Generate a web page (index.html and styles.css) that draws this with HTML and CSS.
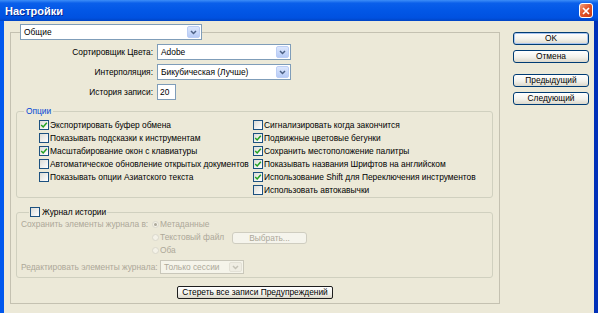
FILE: index.html
```html
<!DOCTYPE html>
<html lang="ru">
<head>
  <meta charset="UTF-8" />
  <title>Настройки</title>
  <link rel="stylesheet" href="styles.css">
</head>
<body>
  <div class="window">
    <div class="titlebar">
      <span class="title">Настройки</span>
      <span class="close-btn">
        <svg width="8" height="8" viewBox="0 0 8 8"><path d="M1 1L7 7M7 1L1 7" stroke="#fff" stroke-width="1.7"/></svg>
      </span>
    </div>

    <div class="client">
      <fieldset class="panel">
        <legend class="panel-legend">
          <div class="combo combo-general">
            <span class="combo-text">Общие</span>
            <span class="combo-btn"><svg width="7" height="5" viewBox="0 0 7 5"><polyline points="1,1 3.5,3.5 6,1" fill="none" stroke="#4D6185" stroke-width="1.5"/></svg></span>
          </div>
        </legend>

        <div class="form-grid">
          <label>Сортировщик Цвета:</label>
          <div class="combo combo-wide">
            <span class="combo-text">Adobe</span>
            <span class="combo-btn"><svg width="7" height="5" viewBox="0 0 7 5"><polyline points="1,1 3.5,3.5 6,1" fill="none" stroke="#4D6185" stroke-width="1.5"/></svg></span>
          </div>
          <label>Интерполяция:</label>
          <div class="combo combo-wide">
            <span class="combo-text">Бикубическая (Лучше)</span>
            <span class="combo-btn"><svg width="7" height="5" viewBox="0 0 7 5"><polyline points="1,1 3.5,3.5 6,1" fill="none" stroke="#4D6185" stroke-width="1.5"/></svg></span>
          </div>
          <label>История записи:</label>
          <div class="textbox">20</div>
        </div>

        <fieldset class="group options">
          <legend class="group-legend">Опции</legend>
          <div class="check-cols">
            <div class="check-col check-col-left">
              <div class="check"><span class="cb"><svg width="8" height="8" viewBox="0 0 8 8"><polyline points="1.2,4 3.2,6 6.8,1.8" fill="none" stroke="#21A121" stroke-width="1.5"/></svg></span>Экспортировать буфер обмена</div>
              <div class="check"><span class="cb"></span>Показывать подсказки к инструментам</div>
              <div class="check"><span class="cb"><svg width="8" height="8" viewBox="0 0 8 8"><polyline points="1.2,4 3.2,6 6.8,1.8" fill="none" stroke="#21A121" stroke-width="1.5"/></svg></span>Масштабирование окон с клавиатуры</div>
              <div class="check"><span class="cb"></span>Автоматическое обновление открытых документов</div>
              <div class="check"><span class="cb"></span>Показывать опции Азиатского текста</div>
            </div>
            <div class="check-col">
              <div class="check"><span class="cb"></span>Сигнализировать когда закончится</div>
              <div class="check"><span class="cb"><svg width="8" height="8" viewBox="0 0 8 8"><polyline points="1.2,4 3.2,6 6.8,1.8" fill="none" stroke="#21A121" stroke-width="1.5"/></svg></span>Подвижные цветовые бегунки</div>
              <div class="check"><span class="cb"><svg width="8" height="8" viewBox="0 0 8 8"><polyline points="1.2,4 3.2,6 6.8,1.8" fill="none" stroke="#21A121" stroke-width="1.5"/></svg></span>Сохранить местоположение палитры</div>
              <div class="check"><span class="cb"><svg width="8" height="8" viewBox="0 0 8 8"><polyline points="1.2,4 3.2,6 6.8,1.8" fill="none" stroke="#21A121" stroke-width="1.5"/></svg></span>Показывать названия Шрифтов на английском</div>
              <div class="check"><span class="cb"><svg width="8" height="8" viewBox="0 0 8 8"><polyline points="1.2,4 3.2,6 6.8,1.8" fill="none" stroke="#21A121" stroke-width="1.5"/></svg></span>Использование Shift для Переключения инструментов</div>
              <div class="check"><span class="cb"></span>Использовать автокавычки</div>
            </div>
          </div>
        </fieldset>

        <fieldset class="group history">
          <legend class="group-legend history-legend"><span class="cb"></span>Журнал истории</legend>
          <div class="hist-row">
            <span class="hist-label hist-label-save">Сохранить элементы журнала в:</span>
            <div class="radios">
              <div class="radio-row"><span class="radio on"></span>Метаданные</div>
              <div class="radio-row"><span class="radio"></span>Текстовый файл<button class="btn btn-disabled btn-pick">Выбрать...</button></div>
              <div class="radio-row"><span class="radio"></span>Оба</div>
            </div>
          </div>
          <div class="hist-row hist-edit">
            <span class="hist-label hist-label-edit">Редактировать элементы журнала:</span>
            <div class="combo combo-disabled">
              <span class="combo-text">Только сессии</span>
              <span class="combo-btn"><svg width="7" height="5" viewBox="0 0 7 5"><polyline points="1,1 3.5,3.5 6,1" fill="none" stroke="#C4C2B6" stroke-width="1.5"/></svg></span>
            </div>
          </div>
        </fieldset>

        <div class="reset-row">
          <button class="btn btn-focus">Стереть все записи Предупреждений</button>
        </div>
      </fieldset>

      <div class="side-buttons">
        <button class="btn btn-default">OK</button>
        <button class="btn btn-cancel">Отмена</button>
        <button class="btn btn-prev">Предыдущий</button>
        <button class="btn btn-next">Следующий</button>
      </div>
    </div>
  </div>
</body>
</html>
```

FILE: styles.css
```css
body {
  margin: 0;
  font-family: "Liberation Sans", Arial, sans-serif;
  font-size: 8.4px;
  color: #000;
  background: #ECE9D8;
  overflow: hidden;
}

.window {
  width: 598px;
  height: 313px;
  display: flex;
  flex-direction: column;
  background: linear-gradient(to right, #0058EE, #0A48D8 50%, #0030B8);
}

.titlebar {
  height: 21px;
  box-sizing: border-box;
  padding: 0 5px 0 5px;
  display: flex;
  align-items: center;
  justify-content: space-between;
  background: linear-gradient(to bottom, #3D8EF8 0%, #0A5FEA 15%, #0257E6 50%, #0051E0 85%, #0044C4 100%);
}

.title {
  color: #fff;
  font-size: 11px;
  font-weight: bold;
  text-shadow: 1px 1px 0 #0A2A93;
}

.close-btn {
  width: 14px;
  height: 15px;
  box-sizing: border-box;
  border: 1px solid #fff;
  border-radius: 3px;
  background: linear-gradient(135deg, #F0A080, #E2552A 45%, #C63A14);
  display: flex;
  align-items: center;
  justify-content: center;
}

.client {
  flex: 1;
  margin: 0 4px;
  background: #ECE9D8;
  display: flex;
  align-items: flex-start;
}

fieldset {
  margin: 0;
  padding: 0;
  min-width: 0;
  min-inline-size: 0;
}

legend {
  padding: 0;
}

.panel {
  width: 490px;
  box-sizing: border-box;
  margin: 3px 0 0 6px;
  padding: 0 0 4px 0;
  border: 1px solid #C4C1B1;
}

.panel-legend {
  margin-left: 9px;
}

/* combo boxes */
.combo {
  display: flex;
  height: 16px;
  box-sizing: border-box;
  border: 1px solid #7F9DB9;
  background: #fff;
}

.combo-text {
  flex: 1;
  padding-left: 3px;
  line-height: 14px;
  white-space: nowrap;
  overflow: hidden;
}

.combo-btn {
  width: 13px;
  margin: 1px;
  border-radius: 2px;
  background: linear-gradient(to bottom, #DCE7FD, #B7CBF6);
  border: 1px solid #BCCEF5;
  box-sizing: border-box;
  display: flex;
  align-items: center;
  justify-content: center;
}

.combo-general {
  width: 182px;
}

.combo-wide {
  width: 134px;
}

.combo-disabled {
  width: 84px;
  height: 14px;
  border-color: #C9C7BA;
  background: #F5F4EA;
  color: #ACA899;
}

.combo-disabled .combo-text {
  line-height: 12px;
}

.combo-disabled .combo-btn {
  background: #EFEDE3;
  border-color: #E3E1D6;
}

.form-grid {
  display: grid;
  grid-template-columns: 142px auto;
  column-gap: 4px;
  row-gap: 4px;
  margin-top: 4px;
  align-items: center;
  justify-items: start;
}

.form-grid label {
  justify-self: end;
}

.textbox {
  width: 19px;
  height: 16px;
  box-sizing: border-box;
  border: 1px solid #7F9DB9;
  background: #fff;
  padding-left: 2px;
  line-height: 14px;
}

/* group boxes */
.group {
  margin: 0 6px 0 5px;
  border: 1px solid #D0D0BF;
  border-radius: 3px;
}

.group-legend {
  margin-left: 7px;
  padding: 0 2px;
  line-height: 11px;
}

.options {
  margin-top: 6px;
  padding: 1px 0 1px 0;
}

.options .group-legend {
  color: #0046D5;
}

.check-cols {
  display: flex;
  padding-left: 22px;
}

.check-col-left {
  width: 214px;
}

.check {
  display: flex;
  align-items: center;
  height: 13px;
  white-space: nowrap;
}

.cb {
  width: 10px;
  height: 10px;
  box-sizing: border-box;
  border: 1px solid #1C5180;
  background: linear-gradient(135deg, #DCDCD7, #FFFFFF);
  margin-right: 1px;
  display: flex;
  align-items: center;
  justify-content: center;
  flex-shrink: 0;
}

.history {
  margin-top: 8px;
  padding: 0 0 3px 4px;
}

.history-legend {
  margin-left: 8px;
  padding: 0 1px;
  display: flex;
  align-items: center;
  line-height: 12px;
}

.history-legend .cb {
  margin-right: 2px;
}

.hist-row {
  display: flex;
  color: #ACA899;
  line-height: 13px;
}

.hist-label {
  white-space: nowrap;
}

.hist-label-save {
  width: 131px;
}

.hist-label-edit {
  width: 139px;
}

.radios {
  width: 155px;
  display: flex;
  flex-direction: column;
}

.radio-row {
  display: flex;
  align-items: center;
  height: 13px;
}

.radio {
  width: 7px;
  height: 7px;
  box-sizing: border-box;
  border: 1px solid #DAD8CC;
  border-radius: 50%;
  background: #F4F2E8;
  margin-right: 1px;
  display: flex;
  align-items: center;
  justify-content: center;
}

.radio.on::after {
  content: "";
  width: 3px;
  height: 3px;
  border-radius: 50%;
  background: #ACA899;
}

.hist-edit {
  margin-top: 3px;
  align-items: center;
}

/* buttons */
.btn {
  font: inherit;
  height: 13px;
  padding: 0;
  box-sizing: border-box;
  border: 1px solid #003C74;
  border-radius: 3px;
  background: linear-gradient(to bottom, #FFFFFF, #F3F2EC 55%, #DCD8CB);
  color: #000;
  line-height: 11px;
  text-align: center;
  white-space: nowrap;
}

.btn-disabled {
  border-color: #CFCDC0;
  background: #F5F4EC;
  color: #ACA899;
}

.btn-pick {
  width: 75px;
  height: 12px;
  margin-left: auto;
  line-height: 10px;
}

.btn-focus {
  width: 156px;
  border-color: #1E1E1E;
  border-radius: 2px;
}

.reset-row {
  display: flex;
  justify-content: center;
  margin-top: 8px;
}

.side-buttons {
  display: flex;
  flex-direction: column;
  width: 76px;
  margin: 11px 0 0 13px;
}

.btn-default {
  box-shadow: inset 0 0 0 1px #A9C4EF;
}

.btn-cancel {
  margin-top: 5px;
}

.btn-prev {
  margin-top: 11px;
}

.btn-next {
  margin-top: 5px;
}
```
